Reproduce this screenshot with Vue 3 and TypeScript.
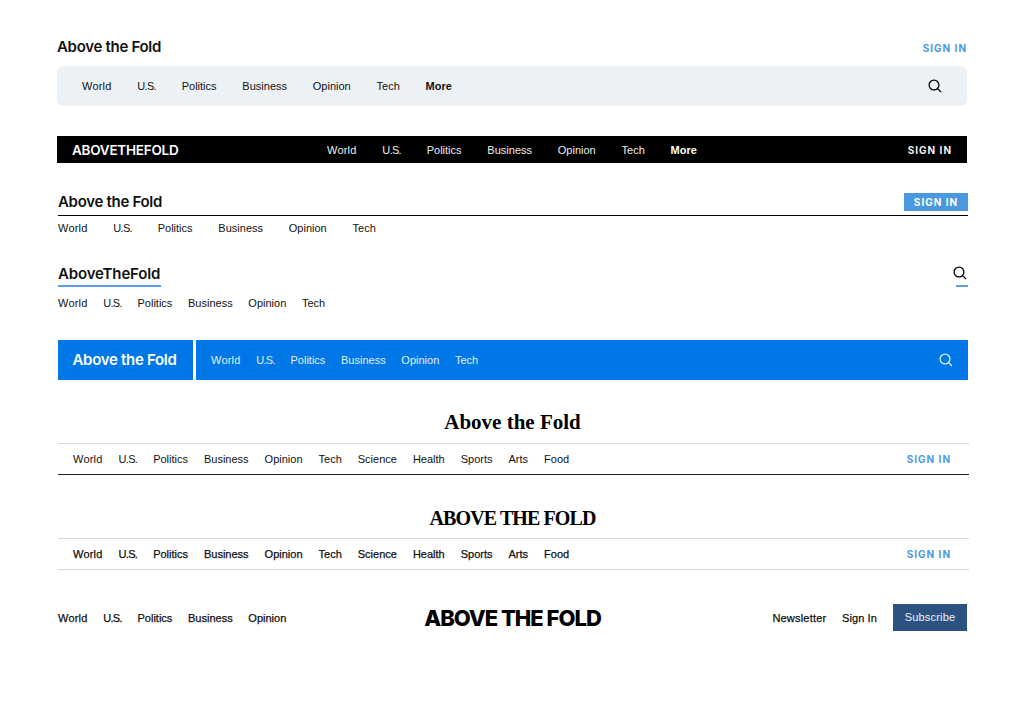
<script setup lang="ts">
const short = ["World", "U.S.", "Politics", "Business", "Opinion", "Tech"];
const long = [...short, "Science", "Health", "Sports", "Arts", "Food"];
const footerLeft = short.slice(0, 5);
</script>

<template>
  <div class="page">
    <!-- 1: title over a grey rounded bar -->
    <header class="one">
      <div class="one-top">
        <span class="logo">Above the Fold</span>
        <a class="signin blue">SIGN IN</a>
      </div>
      <div class="one-bar">
        <nav class="nav gap-25">
          <a v-for="n in short" :key="n" :class="{ us: n === 'U.S.' }">{{ n }}</a>
          <a class="more">More</a>
        </nav>
        <svg class="search" viewBox="0 0 14 14"><circle cx="6" cy="6" r="4.9" /><path d="M9.6 9.6 13 13" /></svg>
      </div>
    </header>

    <!-- 2: black bar -->
    <header class="two">
      <span class="two-logo">ABOVETHEFOLD</span>
      <nav class="nav gap-25 two-nav">
        <a v-for="n in short" :key="n" :class="{ us: n === 'U.S.' }">{{ n }}</a>
        <a class="more">More</a>
      </nav>
      <a class="signin white">SIGN IN</a>
    </header>

    <!-- 3: ruled title -->
    <header class="three">
      <div class="three-top">
        <span class="logo">Above the Fold</span>
        <a class="signin three-btn">SIGN IN</a>
      </div>
      <nav class="nav gap-25 three-nav">
        <a v-for="n in short" :key="n" :class="{ us: n === 'U.S.' }">{{ n }}</a>
      </nav>
    </header>

    <!-- 4: underlined logo -->
    <header class="four">
      <div class="four-top">
        <span class="logo four-logo">AboveTheFold</span>
        <span class="four-search">
          <svg class="search" viewBox="0 0 14 14"><circle cx="6" cy="6" r="4.9" /><path d="M9.6 9.6 13 13" /></svg>
        </span>
      </div>
      <nav class="nav gap-16 four-nav">
        <a v-for="n in short" :key="n" :class="{ us: n === 'U.S.' }">{{ n }}</a>
      </nav>
    </header>

    <!-- 5: blue blocks -->
    <header class="five">
      <span class="five-logo">Above the Fold</span>
      <div class="five-bar">
        <nav class="nav gap-16">
          <a v-for="n in short" :key="n" :class="{ us: n === 'U.S.' }">{{ n }}</a>
        </nav>
        <svg class="search" viewBox="0 0 14 14"><circle cx="6" cy="6" r="4.9" /><path d="M9.6 9.6 13 13" /></svg>
      </div>
    </header>

    <!-- 6: serif masthead -->
    <header class="six">
      <div class="serif six-logo">Above the Fold</div>
      <div class="six-bar">
        <nav class="nav gap-long">
          <a v-for="n in long" :key="n" :class="{ us: n === 'U.S.' }">{{ n }}</a>
        </nav>
        <a class="signin blue">SIGN IN</a>
      </div>
    </header>

    <!-- 7: serif caps masthead -->
    <header class="seven">
      <div class="serif seven-logo">ABOVE THE FOLD</div>
      <div class="seven-bar">
        <nav class="nav gap-long medium">
          <a v-for="n in long" :key="n" :class="{ us: n === 'U.S.' }">{{ n }}</a>
        </nav>
        <a class="signin blue">SIGN IN</a>
      </div>
    </header>

    <!-- 8: three columns -->
    <header class="eight">
      <nav class="nav gap-16 medium">
        <a v-for="n in footerLeft" :key="n" :class="{ us: n === 'U.S.' }">{{ n }}</a>
      </nav>
      <span class="eight-logo">ABOVE THE FOLD</span>
      <div class="eight-right">
        <nav class="nav gap-16 medium wide">
          <a>Newsletter</a>
          <a>Sign In</a>
        </nav>
        <a class="subscribe">Subscribe</a>
      </div>
    </header>
  </div>
</template>

<style>
body {
  background: #fff;
}
</style>

<style scoped>
.page {
  width: 1024px;
  height: 703px;
  overflow: hidden;
  padding-top: 36px;
  box-sizing: border-box;
  font-family: Inter, "Liberation Sans", sans-serif;
  color: #000;
}
.nav {
  display: flex;
  font-family: "Liberation Sans", Arial, sans-serif;
  font-size: 11px;
  line-height: 14px;
  color: #111;
}
.nav a:first-child {
  letter-spacing: 0.2px;
}
.nav .us {
  letter-spacing: -0.7px;
}
.gap-25 {
  gap: 25.8px;
}
.gap-16 {
  gap: 15.7px;
}
.gap-long {
  gap: 16px;
}
.medium {
  -webkit-text-stroke: 0.25px currentColor;
}
.wide {
  letter-spacing: 0.1px;
}
.more {
  font-weight: 700;
}
.logo {
  font-size: 15px;
  line-height: 20px;
  font-weight: 600;
  letter-spacing: -0.3px;
  color: #111;
}
.signin {
  font-size: 10px;
  font-weight: 700;
  letter-spacing: 1px;
  line-height: 14px;
}
.blue {
  color: #4a98e0;
}
.white {
  color: #f0f0f0;
}
.search {
  width: 14px;
  height: 14px;
  fill: none;
  stroke: currentColor;
  stroke-width: 1.3;
  display: block;
}

.one {
  margin: 0 57px;
}
.one-top {
  display: flex;
  justify-content: space-between;
  align-items: center;
  height: 20px;
  padding-top: 1px;
}
.one-top .signin {
  margin-top: 1px;
}
.one-bar {
  margin-top: 9px;
  height: 40px;
  background: #ecf1f6;
  border-radius: 6px;
  display: flex;
  justify-content: space-between;
  align-items: center;
  padding: 0 25px;
}

.two {
  margin: 30px 57px 0;
  height: 27px;
  background: #000;
  display: flex;
  align-items: center;
  padding: 0 15px;
}
.two-logo {
  width: 255px;
  font-size: 13.5px;
  font-weight: 600;
  letter-spacing: -0.25px;
  color: #fff;
}
.two-nav {
  color: #eee;
}
.two-nav .more {
  color: #fff;
}
.two .signin {
  margin-left: auto;
}

.three {
  margin: 26px 56px 0 58px;
}
.three-top {
  display: flex;
  justify-content: space-between;
  align-items: flex-end;
  height: 22px;
  padding-bottom: 4px;
  border-bottom: 1px solid #000;
}
.three-top .logo {
  margin-bottom: -1px;
}
.three-btn {
  background: #4a98e0;
  color: #fff;
  height: 18px;
  line-height: 18px;
  width: 64px;
  text-align: center;
}
.three-nav {
  margin-top: 5px;
}

.four {
  margin: 28px 56px 0 58px;
}
.four-top {
  display: flex;
  justify-content: space-between;
  align-items: flex-start;
}
.four-logo {
  border-bottom: 2px solid #5a9fea;
  padding: 1px 1px 1px 0;
  letter-spacing: -0.15px;
}
.four-search {
  border-bottom: 2px solid #5a9fea;
  width: 12px;
  height: 22px;
}
.four-search .search {
  margin-left: -3px;
  margin-top: 3px;
}
.four-nav {
  margin-top: 9px;
}

.five {
  margin: 30px 56px 0 58px;
  height: 40px;
  display: flex;
  gap: 3px;
}
.five-logo {
  width: 135px;
  box-sizing: border-box;
  background: #0077e6;
  color: #fff;
  font-size: 15px;
  font-weight: 600;
  letter-spacing: -0.3px;
  line-height: 40px;
  text-align: center;
  padding-right: 2px;
}
.five-bar {
  flex: 1;
  background: #0077e6;
  color: #e4f0fc;
  display: flex;
  justify-content: space-between;
  align-items: center;
  padding: 0 15px;
}
.five-bar .nav {
  color: #e4f0fc;
}

.serif {
  font-family: "Liberation Serif", serif;
  font-weight: 700;
  text-align: center;
  color: #000;
  padding-right: 2px;
}
.six {
  margin: 30px 55px 0 58px;
}
.six-logo {
  font-size: 21px;
  line-height: 24px;
}
.six-bar {
  margin-top: 9px;
  height: 30px;
  border-top: 1px solid #d5d8de;
  border-bottom: 1px solid #222;
  display: flex;
  justify-content: space-between;
  align-items: center;
  padding: 0 18px 0 15px;
}
.seven {
  margin: 31px 55px 0 58px;
}
.seven-logo {
  font-size: 20px;
  line-height: 24px;
  letter-spacing: -0.9px;
}
.seven-bar {
  margin-top: 8px;
  height: 30px;
  border-top: 1px solid #d5d8de;
  border-bottom: 1px solid #d5d8de;
  display: flex;
  justify-content: space-between;
  align-items: center;
  padding: 0 18px 0 15px;
}

.eight {
  margin: 34px 57px 0 58px;
  height: 27px;
  display: grid;
  grid-template-columns: 1fr auto 1fr;
  align-items: center;
}
.eight-logo {
  font-size: 22px;
  font-weight: 800;
  letter-spacing: -1px;
  color: #000;
}
.eight-right {
  display: flex;
  justify-content: flex-end;
  align-items: center;
  gap: 16px;
}
.subscribe {
  width: 74px;
  height: 27px;
  line-height: 27px;
  text-align: center;
  background: #2c5282;
  color: #eef2f7;
  font-family: "Liberation Sans", Arial, sans-serif;
  font-size: 11px;
  letter-spacing: 0.2px;
}
</style>
